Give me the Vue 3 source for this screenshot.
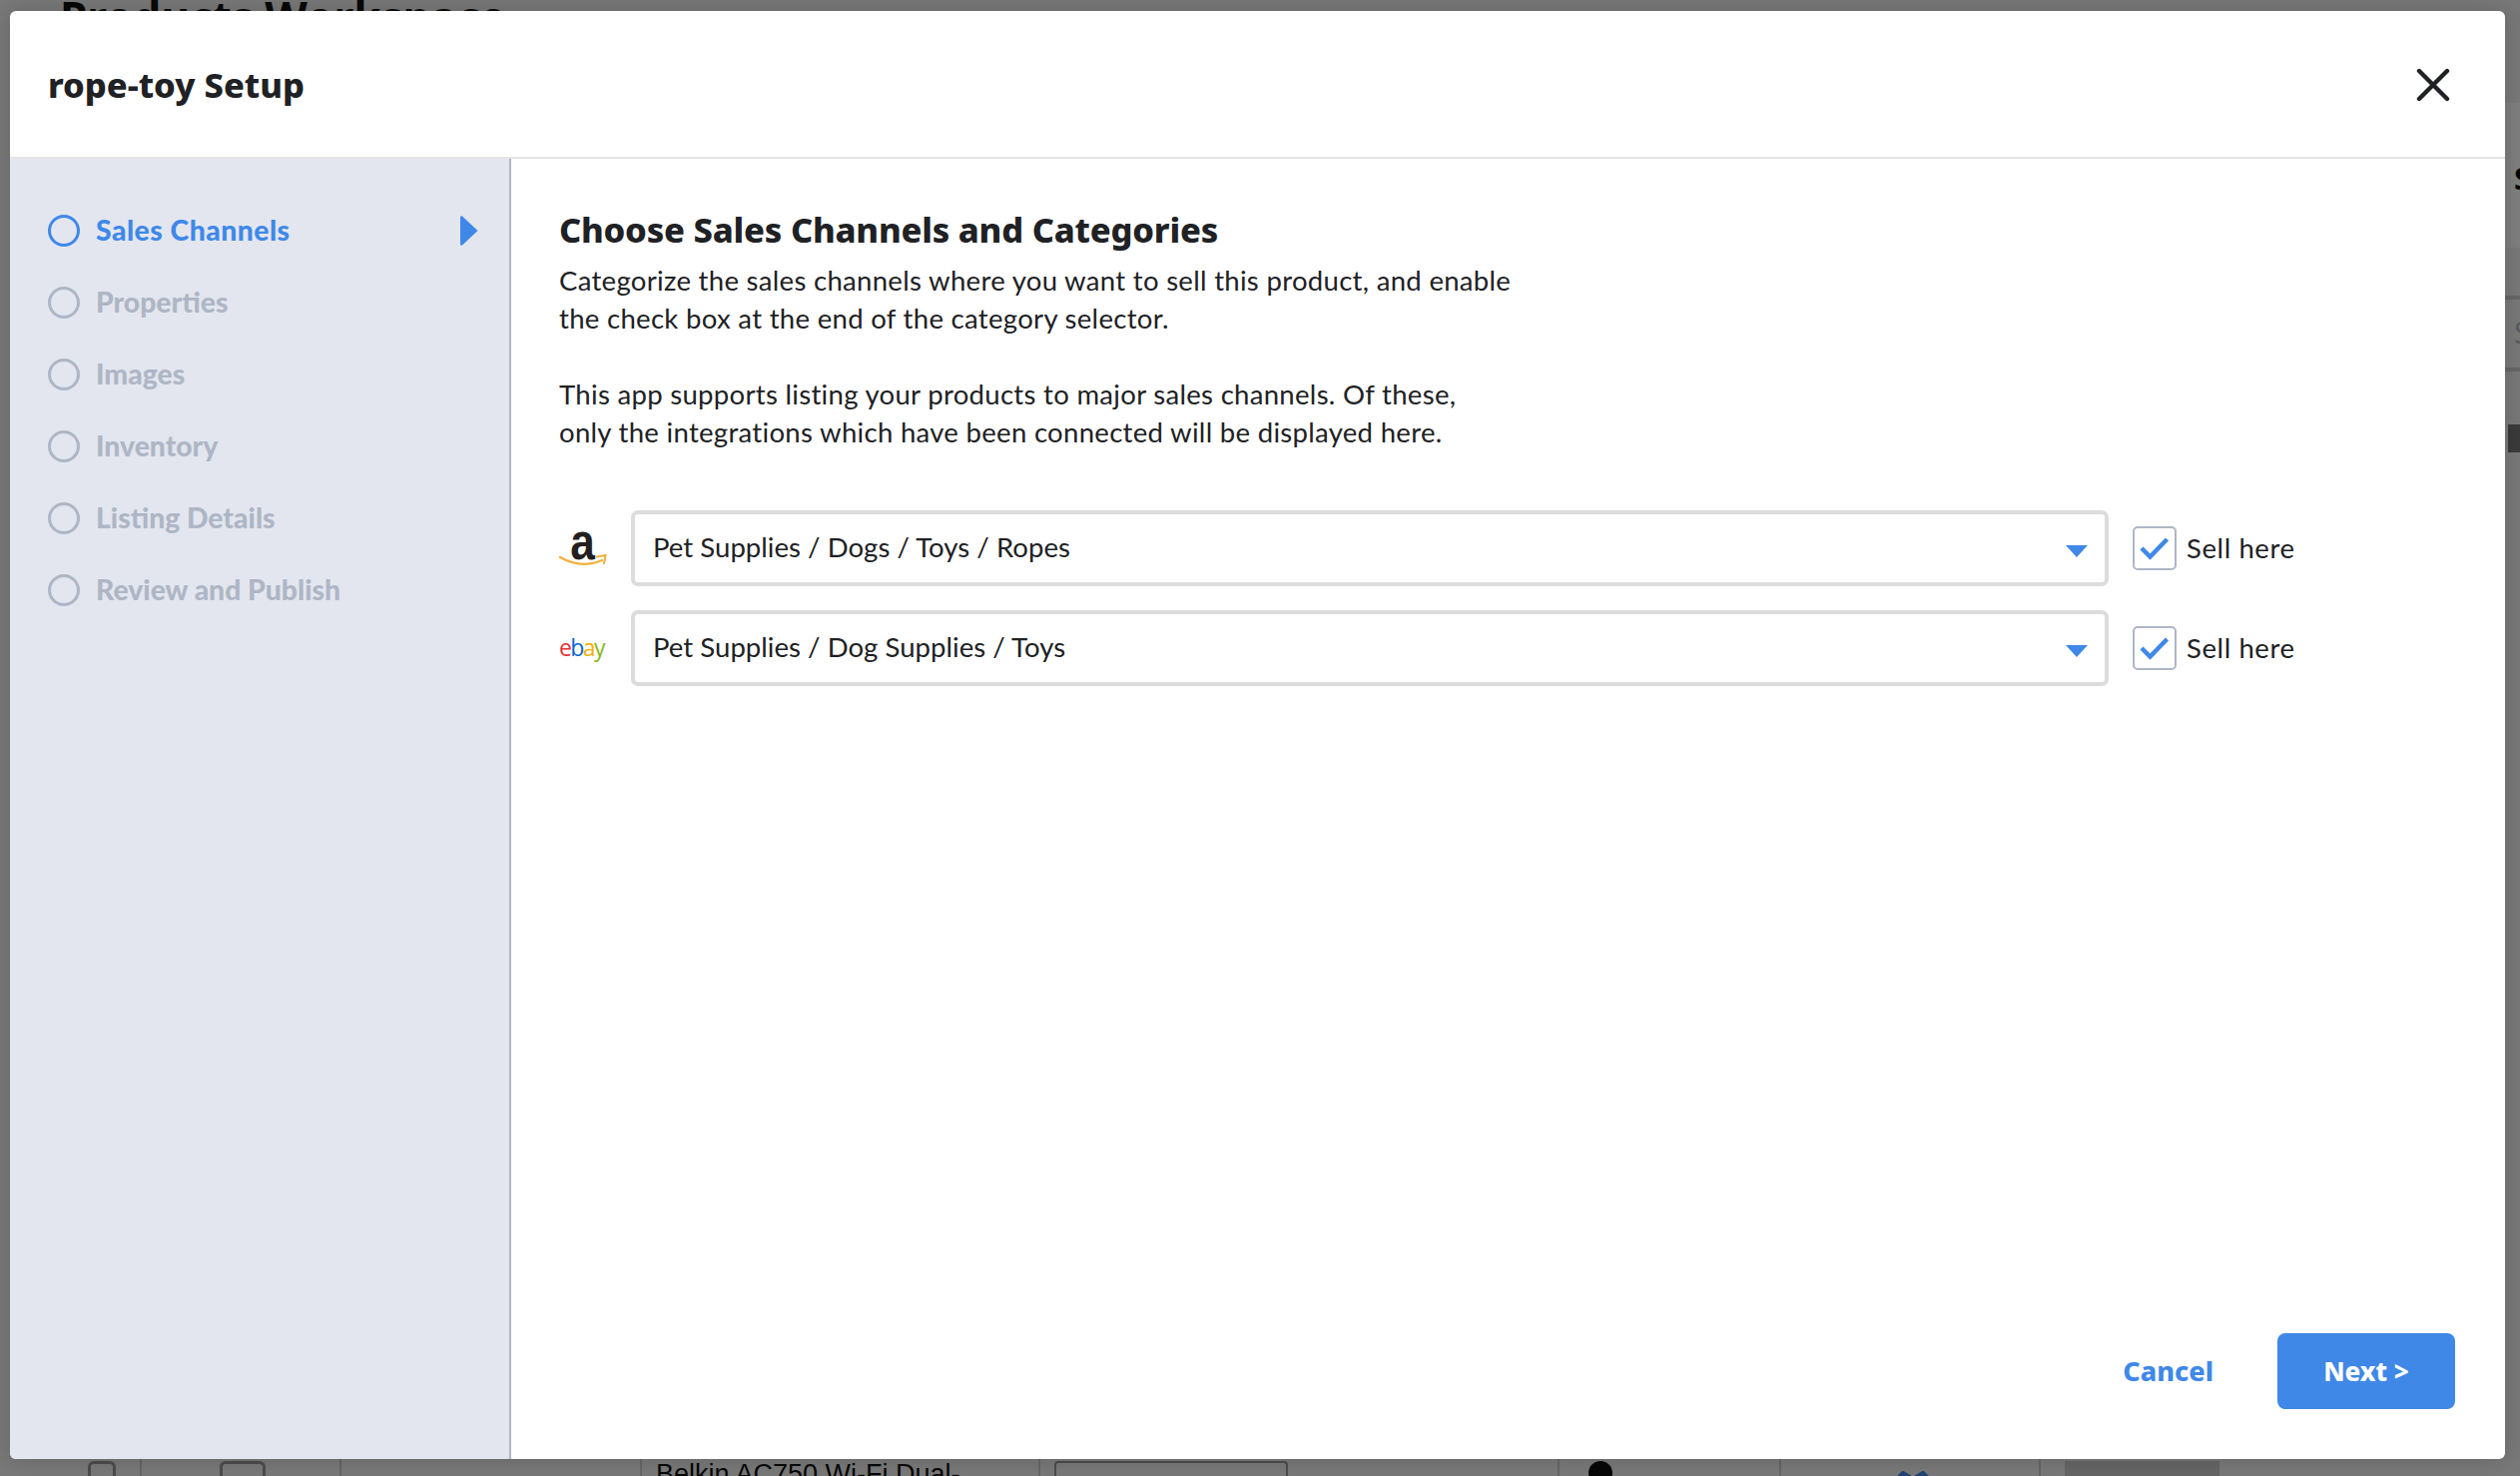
<script setup>
const steps = ['Sales Channels', 'Properties', 'Images', 'Inventory', 'Listing Details', 'Review and Publish']
const channels = [
  { id: 'amazon', category: 'Pet Supplies / Dogs / Toys / Ropes' },
  { id: 'ebay', category: 'Pet Supplies / Dog Supplies / Toys' }
]
</script>

<template>
  <div class="screen">
    <div class="page">
      <div class="page-title">Products Workspace</div>
      <div class="side-band"></div>
      <div class="side-s">S</div>
      <div class="side-line l1"></div>
      <div class="side-s2">S</div>
      <div class="side-line l2"></div>
      <div class="side-shape"></div>
      <div class="page-row">
        <div class="cell c1"><span class="mini m1"></span></div>
        <div class="cell c2"><span class="mini m2"></span></div>
        <div class="cell c3"></div>
        <div class="cell c4">Belkin AC750 Wi-Fi Dual-</div>
        <div class="cell c5"><span class="frame"></span></div>
        <div class="cell c6"></div>
        <div class="cell c7"><span class="blob"></span></div>
        <div class="cell c8">
          <svg width="44" height="12" viewBox="0 0 44 12"><path d="M2 12 L12 2 L22 8 L32 2 L42 12" fill="none" stroke="#3f88e8" stroke-width="4"/></svg>
        </div>
        <div class="cell c9"><span class="grey"></span></div>
      </div>
    </div>
    <div class="overlay">
      <div class="modal">
        <header class="modal-head">
          <h1>rope-toy Setup</h1>
          <svg class="close" width="34" height="34" viewBox="0 0 34 34">
            <path d="M3 3 L31 31 M31 3 L3 31" stroke="#202124" stroke-width="4.4" stroke-linecap="round" fill="none"/>
          </svg>
        </header>
        <div class="modal-body">
          <aside class="sidebar">
            <div v-for="(s, i) in steps" :key="s" class="step" :class="{ active: i === 0 }">
              <span class="dot"></span>
              <span class="step-label">{{ s }}</span>
              <svg v-if="i === 0" class="pointer" width="20" height="32" viewBox="0 0 20 32">
                <path d="M3 1.5 L18.5 16 L3 30.5 Q1 31.5 1 29 L1 3 Q1 .5 3 1.5 Z" fill="#3f88e8"/>
              </svg>
            </div>
          </aside>
          <main class="content">
            <h2>Choose Sales Channels and Categories</h2>
            <p>Categorize the sales channels where you want to sell this product, and enable<br />the check box at the end of the category selector.</p>
            <p>This app supports listing your products to major sales channels. Of these,<br />only the integrations which have been connected will be displayed here.</p>
            <div class="channels">
              <div v-for="c in channels" :key="c.id" class="channel">
                <div class="logo">
                  <div v-if="c.id === 'amazon'" class="amazon">
                    <span class="amazon-a">a</span>
                    <svg class="smile" width="48" height="13" viewBox="0 0 48 13">
                      <path d="M1 3 Q22 15 43 6" fill="none" stroke="#f3b13f" stroke-width="2.4" stroke-linecap="round"/>
                      <path d="M38 2.5 L46.5 1 L45 9" fill="none" stroke="#f3b13f" stroke-width="2" stroke-linecap="round"/>
                    </svg>
                  </div>
                  <div v-else class="ebay"><span class="e">e</span><span class="b">b</span><span class="a">a</span><span class="y">y</span></div>
                </div>
                <div class="select">
                  <span class="select-text">{{ c.category }}</span>
                  <svg class="caret" width="22" height="12" viewBox="0 0 22 12"><path d="M0 0 H22 L11 12 Z" fill="#3f88e8"/></svg>
                </div>
                <label class="sell">
                  <span class="box">
                    <svg width="32" height="26" viewBox="0 0 32 26"><path d="M3 13 L11.5 21.5 L28.5 4" fill="none" stroke="#3f88e8" stroke-width="4.4"/></svg>
                  </span>
                  <span>Sell here</span>
                </label>
              </div>
            </div>
            <footer class="actions">
              <button class="cancel">Cancel</button>
              <button class="next">Next &gt;</button>
            </footer>
          </main>
        </div>
      </div>
    </div>
  </div>
</template>

<style>
html, body { margin: 0; padding: 0; overflow: hidden; }
</style>

<style scoped>
.screen {
  position: relative;
  width: 2524px;
  height: 1478px;
  overflow: hidden;
  font-family: Lato, "Liberation Sans", sans-serif;
}
.page {
  position: absolute;
  inset: 0;
  background: #f2f2f2;
  overflow: hidden;
}
.page-title {
  font: 700 44px/60px "Noto Sans", sans-serif;
  color: #111;
  margin: -13px 0 0 60px;
  white-space: nowrap;
}
.side-s, .side-s2 {
  position: absolute;
  left: 2518px;
  font: 700 30px/30px "Noto Sans", sans-serif;
  color: #111;
}
.side-s { top: 164px; }
.side-s2 { top: 318px; color: #bbb; font-weight: 400; }
.side-band { position: absolute; left: 2500px; right: 0; top: 103px; height: 145px; background: #fff; }
.side-line { position: absolute; left: 2500px; right: 0; height: 4px; background: #ccc; }
.l1 { top: 296px; }
.l2 { top: 368px; }
.side-shape { position: absolute; left: 2512px; right: 0; top: 425px; height: 28px; background: #777; }
.page-row {
  position: absolute;
  left: 0;
  right: 0;
  bottom: 0;
  height: 20px;
  display: flex;
  font: 400 27px/26px "Liberation Sans", sans-serif;
  color: #111;
}
.cell { border-right: 2px solid #ccc; box-sizing: border-box; position: relative; padding-top: 5px; white-space: nowrap; overflow: hidden; }
.c1 { width: 142px; padding-left: 88px; }
.c2 { width: 200px; padding-left: 78px; }
.c3 { width: 301px; }
.c4 { width: 399px; padding-left: 14px; }
.c5 { width: 520px; padding-left: 14px; }
.c6 { width: 0; border: 0; }
.c7 { width: 222px; padding-left: 29px; }
.c8 { width: 260px; padding-left: 110px; }
.c9 { flex: 1; border: 0; padding-left: 24px; }
.mini, .frame, .blob, .grey { display: block; }
.mini { border: 3px solid #999; border-bottom: 0; border-radius: 6px 6px 0 0; height: 20px; box-sizing: border-box; }
.m1 { width: 28px; }
.m2 { width: 46px; }
.frame { height: 20px; border: 2px solid #999; border-bottom: 0; width: 230px; border-radius: 4px 4px 0 0; }
.blob { width: 24px; height: 24px; border-radius: 50%; background: #111; }
.grey { width: 155px; height: 20px; background: #ccc; }
.overlay {
  position: relative;
  width: 2524px;
  height: 1478px;
  box-sizing: border-box;
  padding: 11px 15px 17px 10px;
  background: rgba(0, 0, 0, 0.5);
  display: flex;
}
.modal {
  flex: 1;
  display: flex;
  flex-direction: column;
  background: #fff;
  border-radius: 6px;
  overflow: hidden;
  box-shadow: 0 0 24px rgba(0, 0, 0, 0.18);
}
.modal-head {
  height: 148px;
  flex: none;
  box-sizing: border-box;
  border-bottom: 2px solid #e4e4e4;
  display: flex;
  align-items: center;
  justify-content: space-between;
  padding: 2px 55px 0 38px;
}
h1 {
  margin: 0;
  font: 800 34.5px/44px "Noto Sans", sans-serif;
  color: #202124;
}
.modal-body { flex: 1; display: flex; min-height: 0; }
.sidebar {
  width: 502px;
  flex: none;
  box-sizing: border-box;
  background: #e3e6ee;
  border-right: 2px solid #aeb6c6;
  padding: 36px 30px 0 38px;
}
.step {
  height: 72px;
  display: flex;
  align-items: center;
  color: #aeb6c6;
  font: 900 28.3px/36px Lato, sans-serif;
}
.step-label { margin-top: -3px; }
.step.active { color: #3f88e8; letter-spacing: 0.5px; }
.dot {
  width: 32px;
  height: 32px;
  box-sizing: border-box;
  border: 3px solid currentColor;
  border-radius: 50%;
  margin-right: 16px;
  flex: none;
}
.pointer { margin-left: auto; }
.content {
  flex: 1;
  position: relative;
  box-sizing: border-box;
  padding: 49px 48px 0 48px;
  color: #202124;
  display: flex;
  flex-direction: column;
}
h2 {
  margin: 0 0 10px;
  font: 800 34.5px/44px "Noto Sans", sans-serif;
  letter-spacing: -0.2px;
  color: #202124;
}
p {
  margin: 0 0 38px;
  font: 400 27.5px/38px Lato, sans-serif;
  letter-spacing: 0.31px;
}
.channels { display: flex; flex-direction: column; gap: 24px; margin-top: 21px; }
.channel { display: flex; align-items: center; height: 76px; }
.logo { width: 72px; flex: none; }
.amazon { position: relative; width: 48px; height: 44px; }
.amazon-a {
  display: block;
  text-align: center;
  font: 700 52px/34px "Liberation Sans", sans-serif;
  color: #231f20;
  margin-top: -4px;
  margin-left: -1px;
  transform: scaleX(0.85);
}
.smile { position: absolute; left: 0; top: 30px; }
.ebay { font: 400 23px/30px "Open Sans", sans-serif; letter-spacing: -1.6px; margin-top: -3px; }
.e { color: #e53238; }
.b { color: #0064d2; }
.a { color: #f5af02; }
.y { color: #86b817; }
.select {
  width: 1480px;
  flex: none;
  height: 76px;
  box-sizing: border-box;
  border: 4px solid #dcdcdc;
  border-radius: 7px;
  display: flex;
  align-items: center;
  justify-content: space-between;
  padding: 0 17px 0 18px;
  font: 400 27.5px/36px Lato, sans-serif;
  letter-spacing: 0.05px;
}
.select-text { margin-top: -2px; }
.caret { margin-top: 5px; }
.sell { display: flex; align-items: center; margin-left: 24px; font: 400 27.5px/36px Lato, sans-serif; letter-spacing: 0.6px; }
.box {
  width: 44px;
  height: 44px;
  box-sizing: border-box;
  border: 2.5px solid #aeb6c6;
  border-radius: 5px;
  display: flex;
  align-items: center;
  justify-content: center;
  margin-right: 10px;
}
.actions {
  margin-top: auto;
  margin-bottom: 50px;
  margin-right: 2px;
  display: flex;
  justify-content: flex-end;
  align-items: center;
}
button { border: 0; background: none; padding: 0; font: 800 27px/36px "Noto Sans", sans-serif; }
.cancel { color: #3f88e8; margin-right: 64px; }
.next { width: 178px; height: 76px; border-radius: 8px; background: #3f88e8; color: #fff; font-size: 26px; }
</style>
